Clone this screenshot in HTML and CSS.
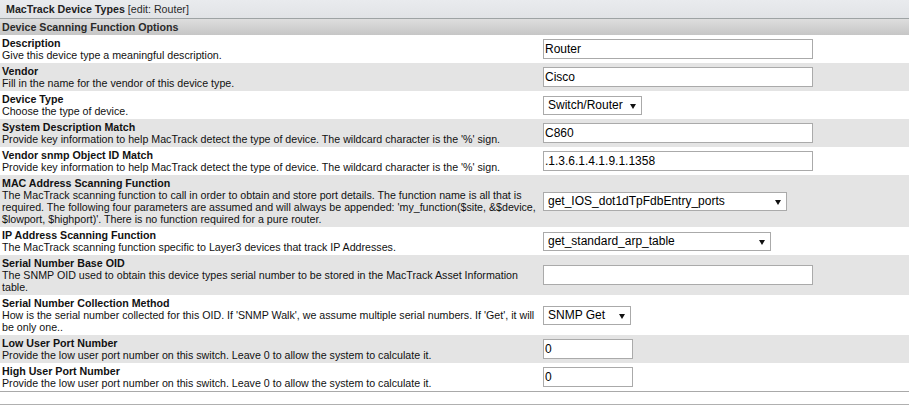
FILE: index.html
```html
<!DOCTYPE html>
<html>
<head>
<meta charset="utf-8">
<link rel="stylesheet" href="styles.css">
</head>
<body>
<div class="panel">
  <div class="title-bar"><b>MacTrack Device Types</b> [edit: Router]</div>
  <div class="section-bar">Device Scanning Function Options</div>

  <div class="row">
    <div class="label"><div class="name">Description</div><div class="desc">Give this device type a meaningful description.</div></div>
    <div class="field"><input class="text wide" type="text" value="Router"></div>
  </div>
  <div class="row alt">
    <div class="label"><div class="name">Vendor</div><div class="desc">Fill in the name for the vendor of this device type.</div></div>
    <div class="field"><input class="text wide" type="text" value="Cisco"></div>
  </div>
  <div class="row">
    <div class="label"><div class="name">Device Type</div><div class="desc">Choose the type of device.</div></div>
    <div class="field"><span class="sel w99"><select><option>Switch/Router</option></select></span></div>
  </div>
  <div class="row alt">
    <div class="label"><div class="name">System Description Match</div><div class="desc">Provide key information to help MacTrack detect the type of device. The wildcard character is the '%' sign.</div></div>
    <div class="field"><input class="text wide" type="text" value="C860"></div>
  </div>
  <div class="row">
    <div class="label"><div class="name">Vendor snmp Object ID Match</div><div class="desc">Provide key information to help MacTrack detect the type of device. The wildcard character is the '%' sign.</div></div>
    <div class="field"><input class="text wide" type="text" value=".1.3.6.1.4.1.9.1.1358"></div>
  </div>
  <div class="row alt">
    <div class="label"><div class="name">MAC Address Scanning Function</div><div class="desc">The MacTrack scanning function to call in order to obtain and store port details. The function name is all that is required. The following four parameters are assumed and will always be appended: 'my_function($site, &amp;$device, $lowport, $highport)'. There is no function required for a pure router.</div></div>
    <div class="field"><span class="sel w244"><select><option>get_IOS_dot1dTpFdbEntry_ports</option></select></span></div>
  </div>
  <div class="row">
    <div class="label"><div class="name">IP Address Scanning Function</div><div class="desc">The MacTrack scanning function specific to Layer3 devices that track IP Addresses.</div></div>
    <div class="field"><span class="sel w228"><select><option>get_standard_arp_table</option></select></span></div>
  </div>
  <div class="row alt">
    <div class="label"><div class="name">Serial Number Base OID</div><div class="desc">The SNMP OID used to obtain this device types serial number to be stored in the MacTrack Asset Information table.</div></div>
    <div class="field"><input class="text wide" type="text" value=""></div>
  </div>
  <div class="row">
    <div class="label"><div class="name">Serial Number Collection Method</div><div class="desc">How is the serial number collected for this OID. If 'SNMP Walk', we assume multiple serial numbers. If 'Get', it will be only one..</div></div>
    <div class="field"><span class="sel w88"><select><option>SNMP Get</option></select></span></div>
  </div>
  <div class="row alt">
    <div class="label"><div class="name">Low User Port Number</div><div class="desc">Provide the low user port number on this switch. Leave 0 to allow the system to calculate it.</div></div>
    <div class="field"><input class="text narrow" type="text" value="0"></div>
  </div>
  <div class="row">
    <div class="label"><div class="name">High User Port Number</div><div class="desc">Provide the low user port number on this switch. Leave 0 to allow the system to calculate it.</div></div>
    <div class="field"><input class="text narrow" type="text" value="0"></div>
  </div>
</div>
<div class="button-bar"></div>
</body>
</html>
```

FILE: styles.css
```css
html, body {
  margin: 0;
  padding: 0;
  background: #ffffff;
}

body {
  font-family: "Liberation Sans", Arial, sans-serif;
  font-size: 10.67px;
  color: #000;
}

.panel {
  border-bottom: 1px solid #a9a9a9;
}

.title-bar {
  height: 18px;
  line-height: 18px;
  padding-left: 6px;
  background: linear-gradient(#e9ebee, #e1e3e6);
  border-bottom: 1px solid #9ea3a4;
  color: #2a2a2a;
}

.title-bar b {
  color: #222;
}

.section-bar {
  height: 16px;
  line-height: 16px;
  padding-left: 2px;
  background: linear-gradient(#dedede, #c6c6c6);
  font-weight: bold;
  color: #2a2a2a;
}

.row {
  display: grid;
  grid-template-columns: 541px 1fr;
  align-items: center;
  background: #ffffff;
}

.row.alt {
  background: #e4e4e4;
}

.label {
  padding: 2px 4px 2px 2px;
  line-height: 12px;
}

.name {
  font-weight: bold;
  color: #111;
}

.desc {
  color: #111;
}

.field {
  padding-left: 2px;
  display: flex;
  align-items: center;
}

.text {
  box-sizing: border-box;
  height: 20px;
  border: 1px solid #aaaaaa;
  padding: 0 1px;
  margin: 0;
  font-family: "Liberation Sans", Arial, sans-serif;
  font-size: 12px;
  color: #000;
  background: #fff;
  outline: none;
}

.text.wide {
  width: 270px;
}

.text.narrow {
  width: 90px;
}

.sel {
  position: relative;
  display: inline-block;
}

.sel select {
  -webkit-appearance: none;
  appearance: none;
  box-sizing: border-box;
  width: 100%;
  height: 19px;
  border: 1px solid #aaaaaa;
  border-radius: 0;
  background: #fff;
  padding: 0 16px 0 4px;
  margin: 0;
  font-family: "Liberation Sans", Arial, sans-serif;
  font-size: 12px;
  color: #000;
  outline: none;
}

.sel::after {
  content: "";
  position: absolute;
  right: 6px;
  top: 8px;
  width: 0;
  height: 0;
  border-left: 3px solid transparent;
  border-right: 3px solid transparent;
  border-top: 5px solid #111;
  pointer-events: none;
}

.w99 { width: 99px; }
.w244 { width: 244px; }
.w228 { width: 228px; }
.w88 { width: 88px; }

.button-bar {
  margin-top: 12px;
  border-top: 1px solid #b0b0b0;
  height: 20px;
}
```
